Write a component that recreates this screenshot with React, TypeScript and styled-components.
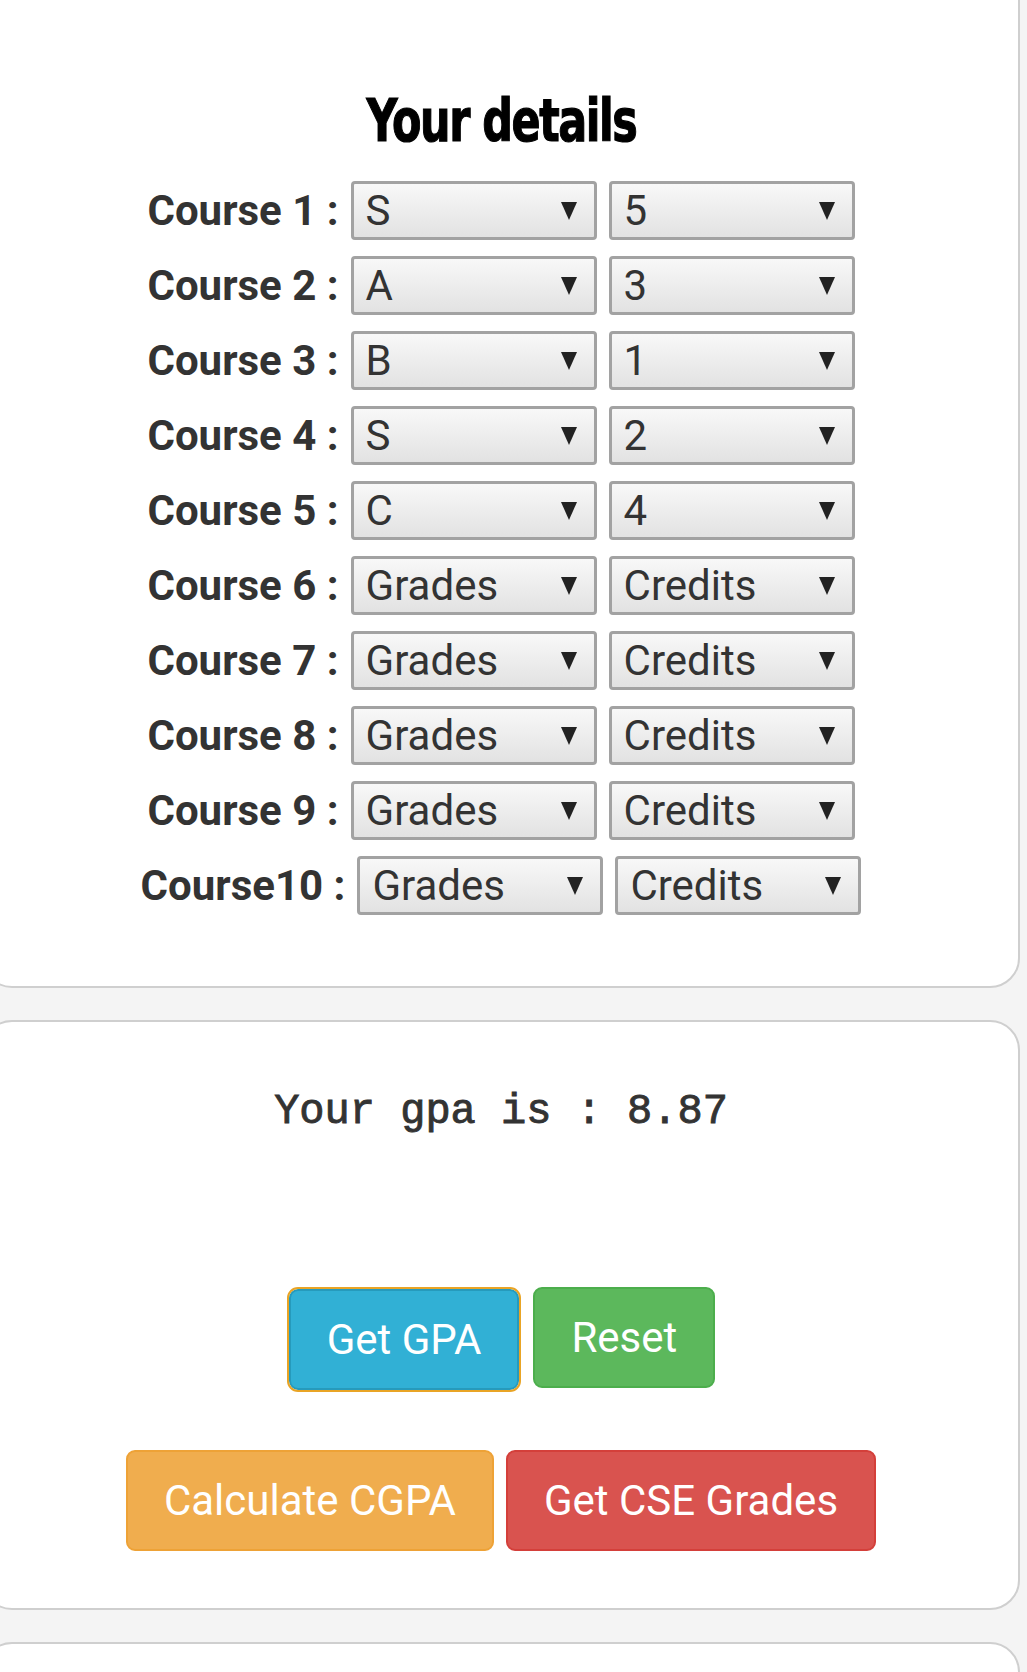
import React from "react";
import styled, { createGlobalStyle } from "styled-components";

const Global = createGlobalStyle`
  html, body { margin: 0; padding: 0; }
  body {
    background: #f4f4f4;
    width: 1027px;
    height: 1672px;
    overflow: hidden;
    font-family: Roboto, "Liberation Sans", sans-serif;
  }
`;

const Page = styled.div`
  display: flex;
  flex-direction: column;
  gap: 32px;
  margin-left: -18px;
  width: 1038px;
`;

const Card = styled.section<{ $top?: number; $pt: number; $pb: number }>`
  box-sizing: border-box;
  background: #fff;
  border: 2px solid #cfcfcf;
  border-radius: 30px;
  margin-top: ${(p) => p.$top ?? 0}px;
  padding: ${(p) => p.$pt}px 0 ${(p) => p.$pb}px;
  display: flex;
  flex-direction: column;
  align-items: center;
`;

const Title = styled.h1`
  margin: 0 0 28px;
  display: inline-block;
  transform: scaleX(0.74);
  font-family: "DejaVu Sans", "Liberation Sans", sans-serif;
  font-weight: 900;
  font-size: 58px;
  line-height: 64px;
  letter-spacing: -2px;
  -webkit-text-stroke: 1.2px #000;
  color: #000;
`;

const Rows = styled.div`
  display: flex;
  flex-direction: column;
  gap: 16px;
`;

const Row = styled.div`
  display: flex;
  align-items: center;
  justify-content: center;
  gap: 12px;
`;

const Label = styled.span`
  font-family: Roboto, "Liberation Sans", sans-serif;
  font-weight: 700;
  font-size: 42px;
  color: #333;
  white-space: pre;
`;

const SelectBox = styled.div`
  box-sizing: border-box;
  width: 246px;
  height: 59px;
  border: 3px solid #a2a2a2;
  border-radius: 4px;
  background: linear-gradient(#f8f8f8, #e2e2e2);
  padding: 0 17px 0 12px;
  display: flex;
  align-items: center;
  justify-content: space-between;
  font-family: Roboto, "Liberation Sans", sans-serif;
  font-size: 42px;
  color: #333;
`;

const Arrow = styled.span`
  width: 0;
  height: 0;
  border-left: 8px solid transparent;
  border-right: 8px solid transparent;
  border-top: 18px solid #222;
`;

const Result = styled.p`
  margin: 0;
  font-family: "Liberation Mono", "Courier New", monospace;
  font-weight: 400;
  font-size: 42px;
  line-height: 48px;
  -webkit-text-stroke: 0.9px #333;
  color: #333;
  white-space: pre;
`;

const ButtonRow = styled.div<{ $mt: number }>`
  display: flex;
  justify-content: center;
  gap: 12px;
  margin-top: ${(p) => p.$mt}px;
`;

const palette = {
  info: ["#31b0d5", "#269abc"],
  success: ["#5cb85c", "#4cae4c"],
  warning: ["#f0ad4e", "#eea236"],
  danger: ["#d9534f", "#d43f3a"],
} as const;

const Button = styled.button<{ $kind: keyof typeof palette; $focus?: boolean }>`
  box-sizing: border-box;
  height: 101px;
  padding: 0 36px;
  border-radius: 9px;
  border: 2px solid ${(p) => palette[p.$kind][1]};
  background: ${(p) => palette[p.$kind][0]};
  color: #fff;
  font-family: Roboto, "Liberation Sans", sans-serif;
  font-size: 42px;
  cursor: pointer;
  outline: ${(p) => (p.$focus ? "2px solid #e9a425" : "none")};
  outline-offset: 0;
  margin: ${(p) => (p.$focus ? "2px" : "0")};
`;

const courses: Array<[string, string]> = [
  ["S", "5"],
  ["A", "3"],
  ["B", "1"],
  ["S", "2"],
  ["C", "4"],
  ["Grades", "Credits"],
  ["Grades", "Credits"],
  ["Grades", "Credits"],
  ["Grades", "Credits"],
  ["Grades", "Credits"],
];

export default function App() {
  return (
    <>
      <Global />
      <Page>
        <Card $top={-40} $pt={127} $pb={71}>
          <Title>Your details</Title>
          <Rows>
            {courses.map(([g, c], i) => (
              <Row key={i}>
                <Label>{i === 9 ? "Course10 :" : `Course ${i + 1} :`}</Label>
                <SelectBox>
                  <span>{g}</span>
                  <Arrow />
                </SelectBox>
                <SelectBox>
                  <span>{c}</span>
                  <Arrow />
                </SelectBox>
              </Row>
            ))}
          </Rows>
        </Card>
        <Card $pt={66} $pb={57}>
          <Result>Your gpa is : 8.87</Result>
          <ButtonRow $mt={151}>
            <Button $kind="info" $focus>Get GPA</Button>
            <Button $kind="success">Reset</Button>
          </ButtonRow>
          <ButtonRow $mt={58}>
            <Button $kind="warning">Calculate CGPA</Button>
            <Button $kind="danger">Get CSE Grades</Button>
          </ButtonRow>
        </Card>
        <Card $pt={200} $pb={0} />
      </Page>
    </>
  );
}
